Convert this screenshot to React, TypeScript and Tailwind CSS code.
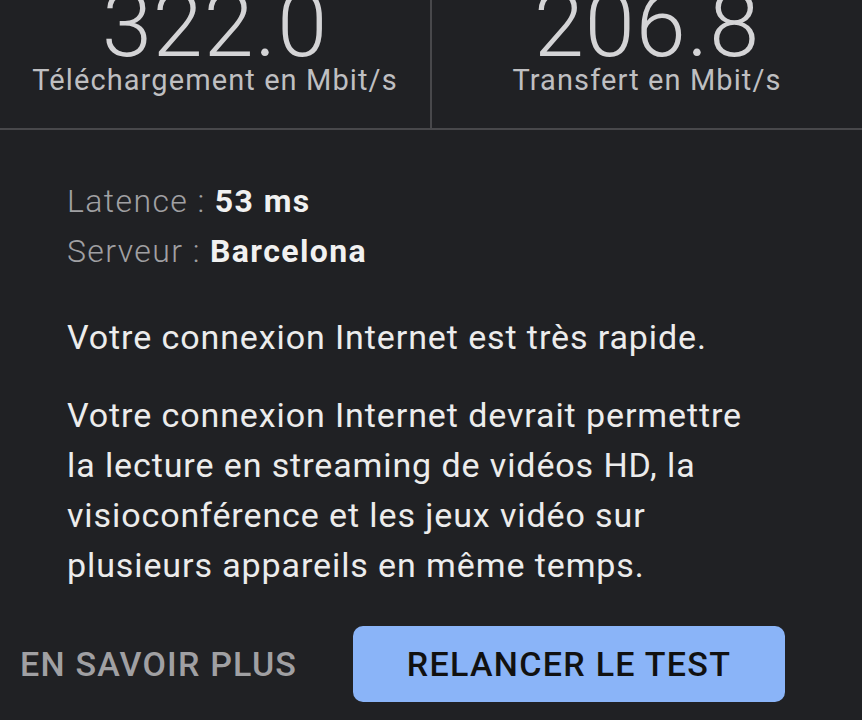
import React from "react";

function Stat({ value, label }: { value: string; label: string }) {
	return (
		<div className="flex flex-1 flex-col items-center">
			<div className="mt-[-19px] text-[90px] font-light leading-[90px] tracking-[1px] text-[#d4d4d6]">
				{value}
			</div>
			<div className="mt-[-8px] text-[29px] leading-[34px] tracking-[1.1px] text-[#bfbfc1]">
				{label}
			</div>
		</div>
	);
}

export default function App() {
	return (
		<div
			className="flex h-[720px] w-[862px] flex-col overflow-hidden bg-[#202124]"
			style={{ fontFamily: "Roboto, 'Liberation Sans', sans-serif" }}
		>
			<div className="flex h-[130px] border-b-2 border-[#48484b]">
				<Stat value="322.0" label="Téléchargement en Mbit/s" />
				<div className="w-[2px] bg-[#48484b]" />
				<Stat value="206.8" label="Transfert en Mbit/s" />
			</div>

			<div className="flex flex-col px-[67px] pt-[46px]">
				<div className="text-[32px] leading-[50px] tracking-[1.4px]">
					<span className="font-light text-[#a0a0a3]">Latence : </span>
					<span className="font-bold text-[#f1f1f1]">53 ms</span>
				</div>
				<div className="text-[32px] leading-[50px] tracking-[1.4px]">
					<span className="font-light text-[#a0a0a3]">Serveur : </span>
					<span className="font-bold text-[#f1f1f1]">Barcelona</span>
				</div>

				<p className="mt-[36px] text-[34px] leading-[50px] tracking-[0.9px] text-[#ececec]">
					Votre connexion Internet est très rapide.
				</p>
				<p className="mt-[28px] w-[690px] text-[34px] leading-[50px] tracking-[0.9px] text-[#ececec]">
					Votre connexion Internet devrait permettre la lecture en streaming de vidéos HD, la
					visioconférence et les jeux vidéo sur plusieurs appareils en même temps.
				</p>
			</div>

			<div className="mt-auto mb-[18px] flex items-center">
				<div className="w-[353px] pl-[20px] text-[34px] font-medium tracking-[1.2px] text-[#a0a0a3]">
					EN SAVOIR PLUS
				</div>
				<button className="flex h-[76px] w-[432px] items-center justify-center rounded-[10px] bg-[#8ab4f8] text-[34px] font-medium tracking-[1.3px] text-[#111]">
					RELANCER LE TEST
				</button>
			</div>
		</div>
	);
}
